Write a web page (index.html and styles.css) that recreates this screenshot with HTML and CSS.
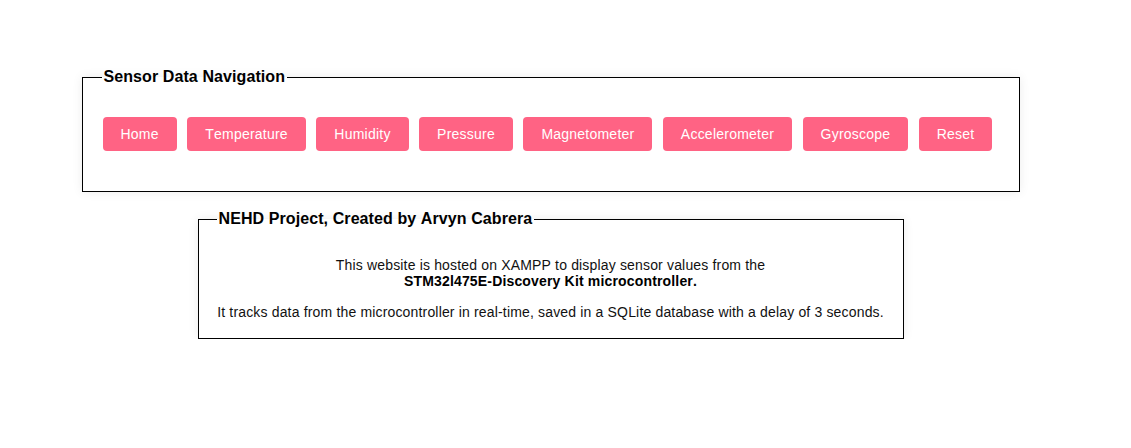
FILE: index.html
```html
<!DOCTYPE html>
<html>
<head>
<meta charset="utf-8">
<title>Sensor Data</title>
<link rel="stylesheet" href="styles.css">
</head>
<body>
<div class="page">
  <fieldset class="box nav-box">
    <legend class="box-title">Sensor Data Navigation</legend>
    <div class="btn-row">
      <button class="btn">Home</button>
      <button class="btn">Temperature</button>
      <button class="btn">Humidity</button>
      <button class="btn">Pressure</button>
      <button class="btn">Magnetometer</button>
      <button class="btn">Accelerometer</button>
      <button class="btn">Gyroscope</button>
      <button class="btn">Reset</button>
    </div>
  </fieldset>
  <fieldset class="box info-box">
    <legend class="box-title">NEHD Project, Created by Arvyn Cabrera</legend>
    <div class="info-body">
      <p class="info-text">This website is hosted on XAMPP to display sensor values from the<br><strong>STM32l475E-Discovery Kit microcontroller.</strong></p>
      <p class="info-text">It tracks data from the microcontroller in real-time, saved in a SQLite database with a delay of 3 seconds.</p>
    </div>
  </fieldset>
</div>
</body>
</html>
```
FILE: styles.css
```css
* { box-sizing: border-box; }
html, body { margin: 0; padding: 0; background: #fff; }
body {
  font-family: "Liberation Sans", Arial, sans-serif;
  color: #000;
  font-kerning: none;
}
.page {
  width: 1101px;
  padding-top: 68px;
  display: flex;
  flex-direction: column;
  align-items: center;
}
.box {
  border: 1px solid #000;
  margin: 0;
  box-shadow: 0 0 10px rgba(0,0,0,0.08);
  background: #fff;
}
.box-title {
  font-size: 16px;
  font-weight: bold;
  padding: 0 2px;
  line-height: 18px;
  letter-spacing: 0.09px;
  text-align: left;
}
.nav-box {
  width: 938px;
  padding: 20px 20px 40px 19px;
}
.btn-row {
  display: flex;
  gap: 10.45px;
  padding-top: 11px;
  padding-left: 1px;
}
.btn {
  background: #ff6384;
  color: #fff;
  border: 0;
  border-radius: 4px;
  font-family: "Liberation Sans", Arial, sans-serif;
  font-kerning: none;
  font-size: 14px;
  line-height: 16px;
  letter-spacing: 0.23px;
  padding: 9px 18px;
}
.info-box {
  width: 706px;
  margin-top: 18px;
  padding: 14px 18px 4px 18px;
}
.info-body {
  text-align: center;
}
.info-text {
  font-size: 14px;
  line-height: 16px;
  letter-spacing: 0.165px;
  margin: 15px 0 14px;
  color: #111;
}
.info-text + .info-text { margin-top: 15px; }
.info-text strong { color: #000; }
```
